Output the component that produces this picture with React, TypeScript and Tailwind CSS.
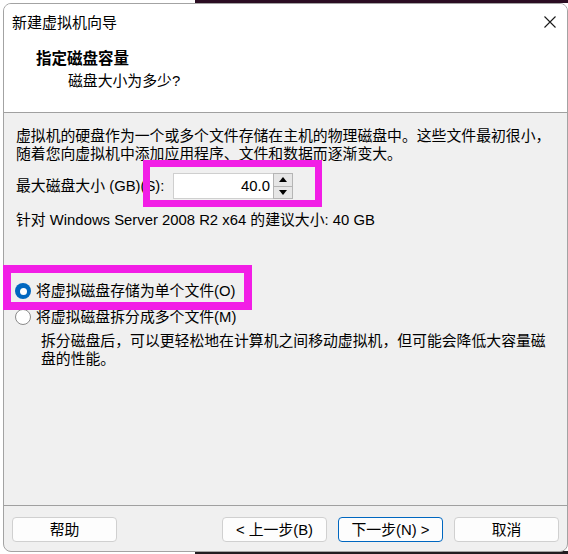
export default function App() {
  const body = "text-[14.85px] leading-[18px]";
  return (
    <div className="relative w-[568px] h-[554px] overflow-hidden bg-white font-['Liberation_Sans','Noto_Sans_CJK_SC',sans-serif] text-black">
      {/* desktop behind the dialog */}
      <div className="absolute left-[195px] top-0 w-[373px] h-[3px] bg-[#2b0d22]" />
      <div className="absolute left-[195px] bottom-0 w-[373px] h-[3px] bg-[#211c20]" />

      {/* dialog window */}
      <div className="absolute left-[3px] top-[3px] w-[565px] h-[549px] flex flex-col rounded-[8px] border border-[#a3a3a3] bg-[#f0f0f0] overflow-hidden">
        {/* header */}
        <div className="bg-white border-b border-[#a0a0a0] pb-[21px]">
          <div className="h-[36px] flex items-center justify-between pl-[8px] pr-[11px]">
            <span className="text-[15px] leading-[20px] font-['Noto_Sans_CJK_SC',sans-serif]">新建虚拟机向导</span>
            <svg width="12" height="12" viewBox="0 0 12 12" className="block">
              <path d="M0.5 0.5 L11.5 11.5 M11.5 0.5 L0.5 11.5" stroke="#1a1a1a" strokeWidth="1.1" fill="none" />
            </svg>
          </div>
          <div className="mt-[9px] pl-[32px] text-[15.5px] leading-[20px] font-bold">指定磁盘容量</div>
          <div className="mt-[2px] pl-[64px] text-[14.85px] leading-[20px]">磁盘大小为多少?</div>
        </div>

        {/* body */}
        <div className="flex flex-col pt-[14px]">
          <div className={`pl-[12px] whitespace-nowrap ${body}`}>
            虚拟机的硬盘作为一个或多个文件存储在主机的物理磁盘中。这些文件最初很小，
            <br />
            随着您向虚拟机中添加应用程序、文件和数据而逐渐变大。
          </div>

          <div className="mt-[10px] pl-[12px] flex items-center h-[26px]">
            <span className={`w-[157px] whitespace-nowrap ${body}`}>最大磁盘大小 (GB)(S):</span>
            <div className="flex h-[26px]">
              <div className="w-[100px] h-[26px] bg-white border border-[#cfcfcf] border-r-0 flex items-center justify-end pr-[3px]">
                <span className={body}>40.0</span>
              </div>
              <div className="w-[20px] h-[26px] flex flex-col border border-[#b5b5b5] bg-[#f0f0f0]">
                <div className="flex-1 flex items-center justify-center bg-[#e6e6e6] border-b border-[#b5b5b5]">
                  <svg width="8" height="5" viewBox="0 0 8 5"><path d="M0 5 L4 0 L8 5 Z" fill="#000" /></svg>
                </div>
                <div className="flex-1 flex items-center justify-center bg-[#e6e6e6]">
                  <svg width="8" height="5" viewBox="0 0 8 5"><path d="M0 0 L8 0 L4 5 Z" fill="#000" /></svg>
                </div>
              </div>
            </div>
          </div>

          <div className={`mt-[12px] pl-[12px] whitespace-nowrap ${body}`}>
            针对 Windows Server 2008 R2 x64 的建议大小: 40 GB
          </div>

          <div className="mt-[52px] pl-[11px] flex items-center h-[20px]">
            <div className="w-[16px] h-[16px] rounded-full bg-[#0067c0] flex items-center justify-center">
              <div className="w-[7px] h-[7px] rounded-full bg-white" />
            </div>
            <span className={`ml-[5px] whitespace-nowrap ${body}`}>将虚拟磁盘存储为单个文件(O)</span>
          </div>

          <div className="mt-[6px] pl-[11px] flex items-center h-[20px]">
            <div className="w-[16px] h-[16px] rounded-full bg-white border border-[#8a8a8a]" />
            <span className={`ml-[5px] whitespace-nowrap ${body}`}>将虚拟磁盘拆分成多个文件(M)</span>
          </div>

          <div className={`mt-[5px] pl-[37px] whitespace-nowrap ${body}`}>
            拆分磁盘后，可以更轻松地在计算机之间移动虚拟机，但可能会降低大容量磁
            <br />
            盘的性能。
          </div>
        </div>

        {/* footer */}
        <div className="mt-auto border-t border-[#a0a0a0] pt-[11px] pb-[9px] px-[8px] flex items-center">
          <button className={`w-[105px] h-[25px] rounded-[4px] border border-[#d0d0d0] bg-[#fdfdfd] ${body}`}>帮助</button>
          <div className="flex-1" />
          <div className="flex gap-[11px]">
            <button className={`w-[105px] h-[25px] rounded-[4px] border border-[#d0d0d0] bg-[#fdfdfd] ${body}`}>&lt; 上一步(B)</button>
            <button className={`w-[105px] h-[25px] rounded-[4px] border border-[#0067c0] bg-[#fdfdfd] ${body}`}>下一步(N) &gt;</button>
            <button className={`w-[105px] h-[25px] rounded-[4px] border border-[#d0d0d0] bg-[#fdfdfd] ${body}`}>取消</button>
          </div>
        </div>
      </div>

      {/* annotation highlight boxes */}
      <div className="absolute left-[143px] top-[160px] w-[179px] h-[47px] border-[7px] border-[#f21ee6]" />
      <div className="absolute left-[3px] top-[265px] w-[249px] h-[45px] border-[8px] border-[#f21ee6]" />
    </div>
  );
}
